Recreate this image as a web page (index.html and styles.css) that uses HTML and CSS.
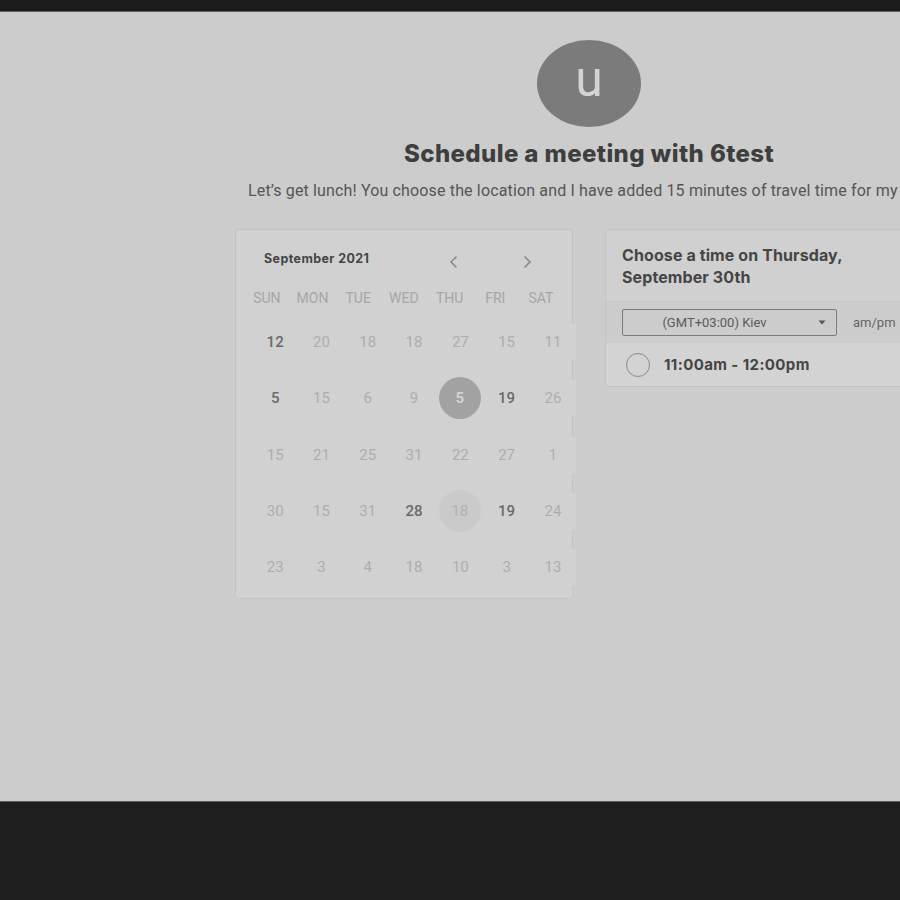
FILE: index.html
```html
<!DOCTYPE html>
<html>
<head>
<meta charset="utf-8">
<link rel="stylesheet" href="styles.css">
</head>
<body>
<div class="topbar"></div>
<div class="main">
  <div class="inner">
    <div class="avatar"><span>u</span></div>
    <h1 class="title">Schedule a meeting with 6test</h1>
    <p class="desc">Let’s get lunch! You choose the location and I have added 15 minutes of travel time for my</p>
    <div class="panels">
      <div class="calendar">
        <div class="cal-head">
          <span class="month">September 2021</span>
          <span class="nav">
            <svg class="chev" width="10" height="14" viewBox="0 0 10 14"><path d="M7.5 1.5 L2 7 L7.5 12.5" fill="none" stroke="#8a8a8a" stroke-width="1.6"/></svg>
            <svg class="chev" width="10" height="14" viewBox="0 0 10 14"><path d="M2.5 1.5 L8 7 L2.5 12.5" fill="none" stroke="#8a8a8a" stroke-width="1.6"/></svg>
          </span>
        </div>
        <div class="weekdays">
          <span>SUN</span><span>MON</span><span>TUE</span><span>WED</span><span>THU</span><span>FRI</span><span>SAT</span>
        </div>
        <div class="dates">
          <span class="on">12</span><span>20</span><span>18</span><span>18</span><span>27</span><span>15</span><span>11</span>
          <span class="on">5</span><span>15</span><span>6</span><span>9</span><span class="sel"><i>5</i></span><span class="on">19</span><span>26</span>
          <span>15</span><span>21</span><span>25</span><span>31</span><span>22</span><span>27</span><span>1</span>
          <span>30</span><span>15</span><span>31</span><span class="on">28</span><span class="hov"><i>18</i></span><span class="on">19</span><span>24</span>
          <span>23</span><span>3</span><span>4</span><span>18</span><span>10</span><span>3</span><span>13</span>
        </div>
      </div>
      <div class="times">
        <div class="times-head">Choose a time on Thursday, September 30th</div>
        <div class="tz-row">
          <div class="tz-select"><span>(GMT+03:00) Kiev</span><svg class="caret" width="8" height="5" viewBox="0 0 8 5"><path d="M0.5 0.5 L7.5 0.5 L4 4.5 Z" fill="#555"/></svg></div>
          <span class="ampm">am/pm</span>
        </div>
        <div class="slot">
          <span class="radio"></span>
          <span class="slot-text">11:00am - 12:00pm</span>
        </div>
      </div>
    </div>
  </div>
</div>
<div class="bottombar"></div>
</body>
</html>
```
FILE: styles.css
```css
html, body {
  margin: 0;
  padding: 0;
  background: #1e1e1e;
  overflow: hidden;
}
.topbar {
  height: 11px;
  background: #1b1b1b;
  border-bottom: 1px solid #5e5e5e;
}
.main {
  height: 789px;
  background: #cccccc;
  overflow: hidden;
}
.bottombar {
  height: 98px;
  border-top: 1px solid #5e5e5e;
  background: #1e1e1e;
}
.inner {
  width: 1178px;
  padding-top: 28px;
  display: flex;
  flex-direction: column;
  align-items: center;
  font-family: Roboto, "Liberation Sans", sans-serif;
}
.avatar {
  width: 104px;
  height: 87px;
  border-radius: 50%;
  background: #7b7b7b;
  display: flex;
  align-items: center;
  justify-content: center;
}
.avatar span {
  font-family: Roboto, sans-serif;
  font-size: 50px;
  line-height: 1;
  color: #d3d3d3;
  margin-top: -10px;
}
.title {
  margin: 14px 0 0;
  font-family: Inter, "Liberation Sans", sans-serif;
  font-weight: 800;
  font-size: 24px;
  line-height: 26px;
  color: #3e3e3e;
  letter-spacing: 0.4px;
}
.desc {
  align-self: flex-start;
  margin: 14px 0 0 248px;
  white-space: nowrap;
  font-size: 16px;
  line-height: 20px;
  color: #555555;
  letter-spacing: 0.15px;
}
.panels {
  margin-top: 28px;
  display: flex;
  gap: 32px;
  align-items: flex-start;
}
.calendar {
  width: 336px;
  height: 368px;
  border: 1px solid #c3c3c3;
  border-radius: 3px;
  background: #d1d1d1;
}
.cal-head {
  display: flex;
  align-items: center;
  height: 24px;
  margin-top: 16px;
  padding-left: 28px;
}
.month {
  font-family: Inter, "Liberation Sans", sans-serif;
  font-weight: 700;
  font-size: 12.5px;
  letter-spacing: 0.4px;
  color: #454545;
}
.nav {
  display: flex;
  gap: 63px;
  margin-left: 80px;
  margin-top: 8px;
}
.weekdays {
  display: grid;
  grid-template-columns: repeat(7, 45.7px);
  margin: 19px 0 0 8px;
  font-size: 14px;
  color: #a6a6a6;
  text-align: center;
  line-height: 18px;
}
.dates {
  display: grid;
  grid-template-columns: repeat(7, 46.3px);
  grid-auto-rows: 56.25px;
  margin: 7px 0 0 16px;
  width: 324px;
}
.dates span {
  height: 36px;
  align-self: center;
  display: flex;
  align-items: center;
  justify-content: center;
  background: #d1d1d1;
  font-size: 15px;
  color: #adadad;
}
.dates span.on {
  color: #6a6a6a;
  font-weight: 500;
}
.dates span.sel i, .dates span.hov i {
  font-style: normal;
  width: 42px;
  height: 42px;
  border-radius: 50%;
  display: flex;
  align-items: center;
  justify-content: center;
  margin-left: -1px;
}
.dates span.sel i {
  background: #a2a2a2;
  color: #d2d2d2;
  font-weight: 700;
}
.dates span.hov i {
  background: #cacaca;
  color: #b0b0b0;
}
.times {
  width: 336px;
  border: 1px solid #c3c3c3;
  border-radius: 3px;
  background: #d0d0d0;
}
.times-head {
  padding: 14px 40px 13px 16px;
  font-family: Inter, "Liberation Sans", sans-serif;
  font-weight: 700;
  font-size: 16px;
  letter-spacing: 0.1px;
  line-height: 22px;
  color: #454545;
  border-bottom: 1px solid #c8c8c8;
}
.tz-row {
  display: flex;
  align-items: center;
  height: 41px;
  padding-left: 16px;
  background: #cccccc;
}
.tz-select {
  width: 213px;
  height: 25px;
  border: 1px solid #7a7a7a;
  border-radius: 2px;
  display: flex;
  align-items: center;
  font-size: 13px;
  color: #5a5a5a;
}
.tz-select span {
  flex: 1;
  text-align: center;
  padding-right: 12px;
}
.caret {
  margin-right: 10px;
}
.ampm {
  margin-left: 16px;
  font-size: 13px;
  color: #666666;
}
.slot {
  display: flex;
  align-items: center;
  height: 43px;
  padding-left: 20px;
  background: #d3d3d3;
}
.radio {
  width: 22px;
  height: 22px;
  border: 1.5px solid #8a8a8a;
  border-radius: 50%;
}
.slot-text {
  margin-left: 14px;
  font-family: Inter, "Liberation Sans", sans-serif;
  font-weight: 700;
  font-size: 15px;
  letter-spacing: 0.4px;
  color: #444444;
}
```
